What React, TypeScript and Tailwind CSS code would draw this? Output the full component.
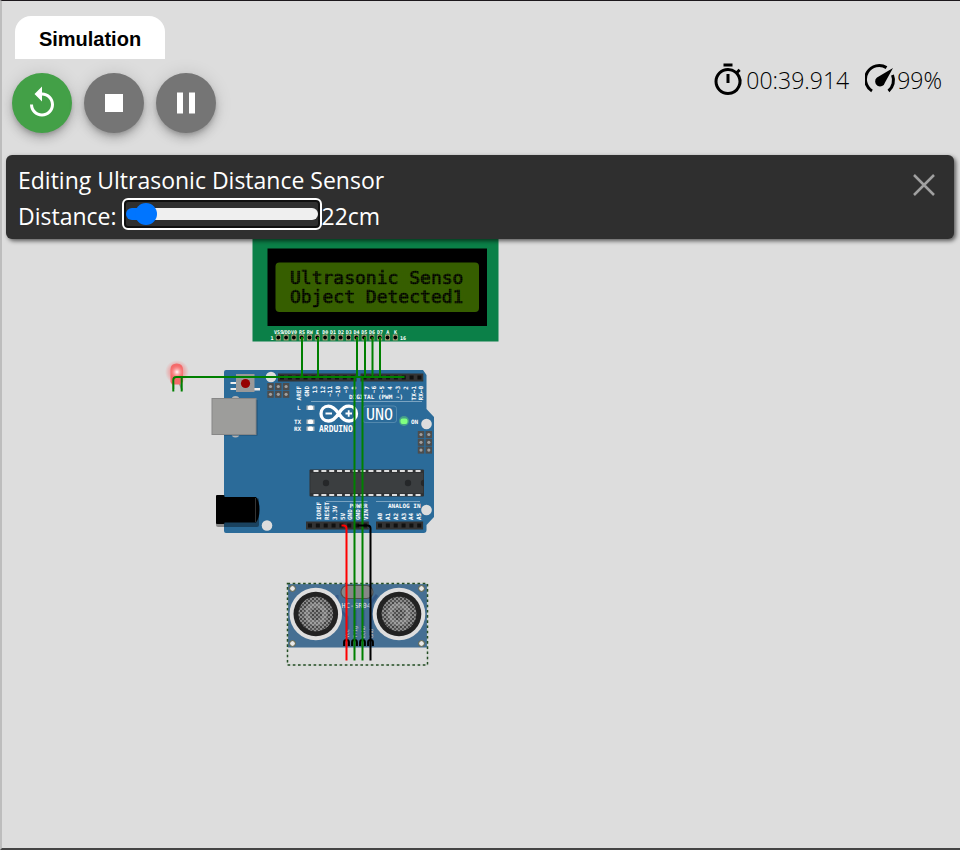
import { useState } from "react";
import type { CSSProperties } from "react";
import { MdReplay, MdStop, MdPause, MdOutlineTimer } from "react-icons/md";

const PITCH = 7.85;
const range = (n: number) => Array.from({ length: n }, (_, i) => i);

function GaugeIcon() {
  return (
    <svg viewBox="0 0 32 32" className="size-8" aria-hidden="true">
      <g fill="none" stroke="#000" strokeWidth="3">
        <path d="M7 27A13.500 13.500 0 0 1 21.500 3.600" />
        <path d="M27.500 11A14 14 0 0 1 23.500 27" />
      </g>
      <path d="M28 4L20 18.500A5 5 0 1 1 12 13.500Z" />
    </svg>
  );
}

function Lcd() {
  const pins = ["VSS", "VDD", "V0", "RS", "RW", "E", "D0", "D1", "D2", "D3", "D4", "D5", "D6", "D7", "A", "K"];
  return (
    <g>
      <rect x="252.500" y="232" width="246" height="109.500" fill="#0b8048" />
      <rect x="267.500" y="248.500" width="219.500" height="77.500" />
      <rect x="275.500" y="262.500" width="203.500" height="49.500" rx="4" fill="#365e00" />
      <g fontSize="18" fill="#000" stroke="#000" strokeWidth=".7">
        <text x="290" y="284">Ultrasonic Senso</text>
        <text x="290" y="303">Object Detected1</text>
      </g>
      <rect x="288" y="268" width="178" height="38" fill="url(#dots)" />
      <g fill="#fff" fontSize="5" fontWeight="bold" textAnchor="middle">
        {pins.map((p, i) => (
          <g key={p}>
            <text x={278.5 + i * 7.8} y="333.500">{p}</text>
            <rect x={275.8 + i * 7.8} y="334.500" width="5" height="6" fill="#a59c72" />
            <circle cx={278.3 + i * 7.8} cy="337.500" r="1.900" fill="#000" />
          </g>
        ))}
        <text x="272" y="340">1</text>
        <text x="403" y="340">16</text>
      </g>
    </g>
  );
}

function Header({ x, y, n }: { x: number; y: number; n: number }) {
  return (
    <g>
      <rect x={x} y={y} width={n * PITCH} height="8" fill="#333" />
      {range(n).map((i) => (
        <rect key={i} x={x + 2 + i * PITCH} y={y + 2} width="4" height="4" fill="#111" />
      ))}
    </g>
  );
}

function Pads({ x, y, cols, rows }: { x: number; y: number; cols: number; rows: number }) {
  return (
    <g>
      {range(cols * rows).map((k) => {
        const cx = x + (k % cols) * 7.8;
        const cy = y + Math.floor(k / cols) * 7.8;
        return (
          <g key={k}>
            <rect x={cx - 3.2} y={cy - 3.5} width="6.400" height="7" fill="#4d4d4d" />
            <circle cx={cx} cy={cy} r="1.600" fill="#a0a0a0" />
          </g>
        );
      })}
    </g>
  );
}

function SideLabels({ labels, x, y, anchor }: { labels: string[]; x: number; y: number; anchor: "start" | "end" }) {
  return (
    <g fill="#fff" fontSize="6" fontWeight="bold" textAnchor={anchor}>
      {labels.map((l, i) => (
        <text key={l + i} transform={`translate(${x + i * PITCH} ${y}) rotate(-90)`}>{l}</text>
      ))}
    </g>
  );
}

function Uno() {
  return (
    <g>
      <path d="M226 370H423L426.500 375V409L434 417V517L426.500 525V530Q426.500 533 423.500 533H226Q224 533 224 531V372Q224 370 226 370Z" fill="#2b6b99" />
      <circle cx="235.500" cy="400" r="4" fill="#b3b3b3" />
      <circle cx="235.500" cy="433.500" r="4" fill="#b3b3b3" />
      <rect x="224" y="400" width="33.500" height="35.500" fill="#1f4f73" />
      <rect x="212" y="398.500" width="44" height="36" fill="#9d9d9b" stroke="#878787" />
      <rect x="216" y="498" width="43" height="29" rx="2" fill="#000" fillOpacity=".38" />
      <rect x="216" y="495" width="8.500" height="29" rx="1" />
      <path d="M224 497H256Q259.500 501 259.500 509.500T256 522.500H224Z" />
      <path d="M255.500 498V522" stroke="#333" />
      <g fill="#eee">
        <rect x="230.500" y="376" width="6" height="2" />
        <rect x="230.500" y="382" width="6" height="2" />
        <rect x="230.500" y="388" width="6" height="2" />
        <rect x="254" y="388" width="6" height="2.500" />
      </g>
      <rect x="236" y="374" width="18.500" height="18" fill="#999" />
      <circle cx="245.500" cy="383.500" r="4.600" fill="#960000" />
      <Header x={278} y={373.5} n={10} />
      <Header x={360.5} y={373.5} n={8} />
      <Header x={306} y={521.5} n={8} />
      <Header x={376} y={521.5} n={6} />
      <Pads x={270.5} y={386.5} cols={3} rows={2} />
      <Pads x={421} y={434.5} cols={2} rows={3} />
      <g fill="#ddd">
        <circle cx="271" cy="377" r="5.300" />
        <circle cx="426.500" cy="424" r="5.300" />
        <circle cx="426.500" cy="510" r="5.300" />
        <circle cx="267" cy="525.500" r="5.300" />
      </g>
      <SideLabels labels={["AREF", "GND", "13", "12", "~11", "~10", "~9", "8"]} x={301} y={386} anchor="end" />
      <SideLabels labels={["7", "~6", "~5", "4", "~3", "2", "TX→1", "RX←0"]} x={368.5} y={386} anchor="end" />
      <SideLabels labels={["IOREF", "RESET", "3.3V", "5V", "GND", "GND", "VIN"]} x={321} y={520} anchor="start" />
      <SideLabels labels={["A0", "A1", "A2", "A3", "A4", "A5"]} x={382} y={520} anchor="start" />
      <path d="M311 401.500H422M326 501.500H367.500M376 501.500H420" stroke="#9dbdd3" strokeWidth=".7" />
      <g fill="#fff" fontWeight="bold" fontSize="6">
        <text x="349" y="399">DIGITAL (PWM ~)</text>
        <text x="349.500" y="508">POWER</text>
        <text x="388" y="508">ANALOG IN</text>
        <text x="297" y="410">L</text>
        <text x="294" y="423.500">TX</text>
        <text x="294" y="430.500">RX</text>
        <text x="411" y="423.500">ON</text>
      </g>
      {[407.500, 421.500, 428.500].map((y) => (
        <g key={y}>
          <rect x="306.500" y={y - 2} width="8" height="4.500" fill="#b0b7bc" />
          <rect x="308" y={y - 2} width="5" height="4.500" rx="1.500" fill="#fff" />
        </g>
      ))}
      <path
        d="M338.700 413.500C334 407 331.500 406.200 328.500 406.200C324 406.200 321 409.500 321 413.700S324 421 328.500 421C331.500 421 334.500 420 338.700 413.500C343 407 345.500 406.200 349 406.200C353.500 406.200 356.500 409.500 356.500 413.700S353.500 421 349 421C345.500 421 343 420 338.700 413.500Z"
        fill="none" stroke="#fff" strokeWidth="3.300"
      />
      <path d="M325.500 413.500H332M345.500 413.500H352M348.700 410.300V416.700" stroke="#fff" strokeWidth="1.800" />
      <text x="319" y="431.500" fontSize="8" fontWeight="bold" fill="#fff">ARDUINO</text>
      <rect x="363" y="406" width="33.500" height="16.500" rx="2.500" fill="none" stroke="#5d8fb3" strokeWidth=".8" />
      <text x="366" y="419.500" fontSize="15" fill="#fff">UNO</text>
      <circle cx="404" cy="421" r="5" fill="#62d57a" opacity=".5" />
      <rect x="400.500" y="418.500" width="7" height="5.500" rx="2" fill="#80ff80" />
      <rect x="309.500" y="469.500" width="114.500" height="27" rx="1" fill="#303234" />
      <rect x="310.500" y="473" width="112.500" height="20" fill="#3b3e40" />
      {range(14).map((i) => (
        <g key={i} fill="#ddd">
          <rect x={313.500 + i * PITCH} y="470" width="5" height="2" />
          <rect x={313.500 + i * PITCH} y="494" width="5" height="2" />
        </g>
      ))}
      <g fill="#252729">
        <circle cx="326" cy="483" r="3.200" />
        <circle cx="408" cy="483" r="3.200" />
        <path d="M424 479.800A3.200 3.200 0 0 0 424 486.200Z" />
      </g>
    </g>
  );
}

function Transducer({ cx }: { cx: number }) {
  return (
    <g>
      <circle cx={cx} cy="614" r="26.300" fill="#dedede" />
      <circle cx={cx} cy="614" r="22.300" fill="#222" />
      <circle cx={cx} cy="614" r="17.300" fill="#555" />
      <circle cx={cx} cy="614" r="17.300" fill="url(#mesh)" />
      <circle cx={cx} cy="614" r="9" fill="none" stroke="#ddd" strokeOpacity=".25" strokeWidth="5" />
    </g>
  );
}

function Ultrasonic() {
  return (
    <g>
      <rect x="287.500" y="583" width="140" height="64.500" fill="#456f93" />
      <path d="M347 640V617L337 607V595M355 640V610M363 640V610M371 640V603L377 595" fill="none" stroke="#355a88" strokeWidth="3" />
      <rect x="341" y="585.500" width="32" height="13" rx="6.500" fill="#878787" stroke="#505050" strokeWidth="1.200" />
      <text x="341.500" y="608" fontSize="7" fill="#e6e6e6">HC-SR04</text>
      <Transducer cx={315.800} />
      <Transducer cx={399} />
      {[292.500, 421.500].map((x) =>
        [588.500, 643.500].map((y) => (
          <circle key={`${x}-${y}`} cx={x} cy={y} r="2.900" fill="#e8e8e8" stroke="#5c5c3d" />
        )),
      )}
      <g fill="#ddd" fontSize="5">
        {["Vcc", "Trig", "Echo", "Gnd"].map((l, i) => (
          <text key={l} transform={`translate(${348.500 + i * 8} 638) rotate(-90)`}>{l}</text>
        ))}
      </g>
      {[346.500, 354.500, 362.500, 370.500].map((x) => (
        <path key={x} d={`M${x - 2.300} 646V642Q${x - 2.300} 640 ${x} 640T${x + 2.300} 642V646`} fill="none" stroke="#000" strokeWidth="2.200" />
      ))}
      <rect x="287.500" y="583.500" width="140" height="81.500" fill="none" stroke="#cfd8cf" strokeWidth="1.200" />
      <rect x="287.500" y="583.500" width="140" height="81.500" fill="none" stroke="#234b23" strokeWidth="1.500" strokeDasharray="2.600 2.600" />
    </g>
  );
}

function Led() {
  return (
    <g>
      <circle cx="177" cy="372" r="12" fill="url(#halo)" />
      <path d="M173.500 383V389M179.500 383L182 390" fill="none" stroke="#8c8c8c" strokeWidth="1.600" />
      <path d="M170.500 382V369.500Q170.500 363.500 176.700 363.500T183 369.500V382L180 384.500H172Z" fill="#f46a6a" />
      <circle cx="177" cy="372" r="7" fill="url(#glow)" />
    </g>
  );
}

function Wires() {
  return (
    <g fill="none" stroke="#008000" strokeWidth="2">
      <path d="M302 337V377M318 337V377M357 337V377M365 337V377M372.500 337V377M380 337V377" />
      <path d="M173.300 391.500V380Q173.300 377 176.300 377H404.500M181.700 391.500V377" />
      <path d="M354.500 377V660.500M362.500 377V660.500" />
      <path d="M341.500 525.500H343.500Q346.500 525.500 346.500 528.500V660.500" stroke="#f00" />
      <path d="M357.500 525.500H367.500Q370.500 525.500 370.500 528.500V660.500" stroke="#000" />
    </g>
  );
}

function Circuit() {
  return (
    <svg
      width="360"
      height="440"
      viewBox="150 239 360 440"
      role="img"
      aria-label="Circuit"
      className="ml-[148px] font-['DejaVu_Sans_Mono','Liberation_Mono',monospace]"
    >
      <defs>
        <radialGradient id="halo">
          <stop offset=".3" stopColor="#ff5050" stopOpacity=".6" />
          <stop offset="1" stopColor="#ff5050" stopOpacity="0" />
        </radialGradient>
        <radialGradient id="glow">
          <stop offset="0" stopColor="#fff" />
          <stop offset="1" stopColor="#ff8080" stopOpacity="0" />
        </radialGradient>
        <pattern id="dots" width="2" height="2" patternUnits="userSpaceOnUse">
          <path d="M0 0H2M0 0V2" stroke="#365e00" strokeOpacity=".4" />
        </pattern>
        <pattern id="mesh" width="4" height="4" patternUnits="userSpaceOnUse">
          <path d="M0 0H2V2H0ZM2 2H4V4H2Z" fill="#8c8c8c" />
          <path d="M0 2H2V4H0Z" fill="#444" />
        </pattern>
      </defs>
      <Lcd />
      <Led />
      <Uno />
      <Ultrasonic />
      <Wires />
    </svg>
  );
}

const fab =
  "flex size-[60px] items-center justify-center rounded-full text-white shadow-[0_3px_5px_-1px_rgba(0,0,0,0.2),0_6px_10px_rgba(0,0,0,0.14),0_1px_18px_rgba(0,0,0,0.12)]";

export default function App() {
  const [distance, setDistance] = useState(22);
  const fill = { "--fill": `${5 + (distance / 400) * 90}%` } as CSSProperties;

  return (
    <div className="flex min-h-screen flex-col overflow-hidden border-t border-b-2 border-l-2 border-t-[#1c181c] border-b-[#444] border-l-[#bdbdbd] bg-[#ddd] font-['Open_Sans','Noto_Sans',sans-serif] text-black">
      <header className="flex justify-between pt-[15px] pr-[18px] pl-[10px]">
        <div>
          <button className="ml-[3px] block h-[43px] w-[150px] rounded-t-2xl bg-white pt-0.5 font-['Liberation_Sans',Arial,sans-serif] text-xl font-bold">
            Simulation
          </button>
          <div className="mt-[14px] flex gap-3">
            <button aria-label="Restart" className={`${fab} bg-[#43a047]`}><MdReplay size={36} /></button>
            <button aria-label="Stop" className={`${fab} bg-[#757575]`}><MdStop size={36} /></button>
            <button aria-label="Pause" className={`${fab} bg-[#757575]`}><MdPause size={36} /></button>
          </div>
        </div>
        <div className="mt-11 flex h-10 items-center gap-4 text-[23px] font-light">
          <span className="flex items-center"><MdOutlineTimer size={36} />00:39.914</span>
          <span className="flex items-center"><GaugeIcon />99%</span>
        </div>
      </header>
      <section className="relative z-10 mt-[21px] mr-1.5 ml-1 flex justify-between rounded-md bg-[#2f2f2f] px-3 pt-[7px] pb-[5px] text-[23px] leading-9 text-white shadow-[2px_2px_4px_rgba(0,0,0,0.6)] [header+&]:mt-[22px]">
        <div>
          <h1>Editing Ultrasonic Distance Sensor</h1>
          <div className="flex items-center">
            <label htmlFor="distance" className="mr-[5px]">Distance:</label>
            <input
              id="distance"
              type="range"
              min={0}
              max={400}
              value={distance}
              onChange={(e) => setDistance(Number(e.target.value))}
              style={fill}
              className="mb-1 h-8 w-[200px] appearance-none rounded-md border-2 border-white bg-transparent px-0.5 shadow-[inset_0_0_0_2px_#101010] outline-none [&::-webkit-slider-runnable-track]:h-3 [&::-webkit-slider-runnable-track]:rounded-full [&::-webkit-slider-runnable-track]:bg-[linear-gradient(to_right,#0075ff_var(--fill),#efefef_var(--fill))] [&::-webkit-slider-thumb]:-mt-[5px] [&::-webkit-slider-thumb]:size-[22px] [&::-webkit-slider-thumb]:appearance-none [&::-webkit-slider-thumb]:rounded-full [&::-webkit-slider-thumb]:bg-[#0075ff]"
            />
            <output htmlFor="distance">{distance}cm</output>
          </div>
        </div>
        <button aria-label="Close" className="mt-2 mr-1 size-7 text-[#a0a0a0]">
          <svg viewBox="0 0 28 28" className="size-7" fill="none" stroke="currentColor" strokeWidth="2.500">
            <path d="M4 5L24 25M24 5L4 25" />
          </svg>
        </button>
      </section>
      <Circuit />
    </div>
  );
}
